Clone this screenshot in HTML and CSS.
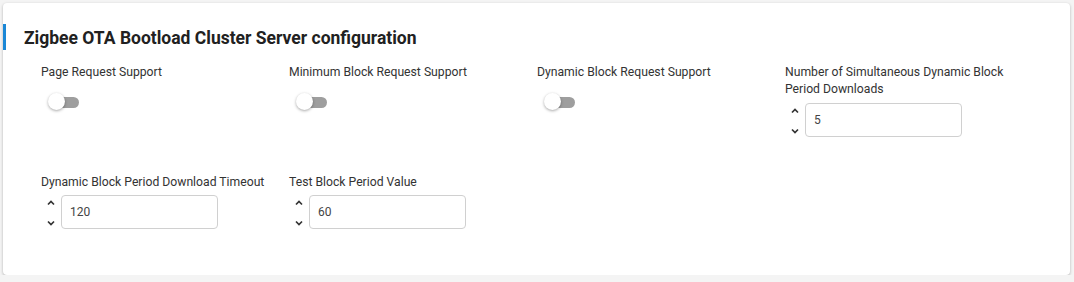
FILE: index.html
```html
<!DOCTYPE html>
<html>
<head>
    <title>Zigbee OTA Bootload Cluster Server configuration</title>
    <meta name="viewport" content="width=device-width, initial-scale=1">
    <link rel="stylesheet" href="styles.css">
</head>
<body>
    <div class="config-card">
        <div class="card-header">
            <h2 class="card-title">Zigbee OTA Bootload Cluster Server configuration</h2>
        </div>
        <div class="field-grid">
            <div class="field">
                <label class="field-label">Page Request Support</label>
                <div class="toggle"><span class="toggle-track"></span><span class="toggle-knob"></span></div>
            </div>
            <div class="field">
                <label class="field-label">Minimum Block Request Support</label>
                <div class="toggle"><span class="toggle-track"></span><span class="toggle-knob"></span></div>
            </div>
            <div class="field">
                <label class="field-label">Dynamic Block Request Support</label>
                <div class="toggle"><span class="toggle-track"></span><span class="toggle-knob"></span></div>
            </div>
            <div class="field">
                <label class="field-label">Number of Simultaneous Dynamic Block Period Downloads</label>
                <div class="number-row">
                    <div class="spinner">
                        <svg width="8" height="6" viewBox="0 0 8 6"><path d="M1 4.5 L4 1.5 L7 4.5" fill="none" stroke="#333" stroke-width="1.7"/></svg>
                        <svg width="8" height="6" viewBox="0 0 8 6"><path d="M1 1.5 L4 4.5 L7 1.5" fill="none" stroke="#333" stroke-width="1.7"/></svg>
                    </div>
                    <input class="number-input" type="text" value="5">
                </div>
            </div>
            <div class="field">
                <label class="field-label">Dynamic Block Period Download Timeout</label>
                <div class="number-row">
                    <div class="spinner">
                        <svg width="8" height="6" viewBox="0 0 8 6"><path d="M1 4.5 L4 1.5 L7 4.5" fill="none" stroke="#333" stroke-width="1.7"/></svg>
                        <svg width="8" height="6" viewBox="0 0 8 6"><path d="M1 1.5 L4 4.5 L7 1.5" fill="none" stroke="#333" stroke-width="1.7"/></svg>
                    </div>
                    <input class="number-input" type="text" value="120">
                </div>
            </div>
            <div class="field">
                <label class="field-label">Test Block Period Value</label>
                <div class="number-row">
                    <div class="spinner">
                        <svg width="8" height="6" viewBox="0 0 8 6"><path d="M1 4.5 L4 1.5 L7 4.5" fill="none" stroke="#333" stroke-width="1.7"/></svg>
                        <svg width="8" height="6" viewBox="0 0 8 6"><path d="M1 1.5 L4 4.5 L7 1.5" fill="none" stroke="#333" stroke-width="1.7"/></svg>
                    </div>
                    <input class="number-input" type="text" value="60">
                </div>
            </div>
        </div>
    </div>
</body>
</html>
```

FILE: styles.css
```css
html, body {
    margin: 0;
    padding: 0;
}
body {
    background: #f4f4f4;
    font-family: Roboto, 'Liberation Sans', Arial, sans-serif;
    color: #333;
    padding: 3px 4px 0 3px;
}
.config-card {
    background: #fff;
    border-radius: 4px;
    box-shadow: 0 1px 3px rgba(0, 0, 0, 0.28);
    padding: 21px 0 47px 0;
    height: 272px;
    box-sizing: border-box;
}
.card-header {
    height: 26px;
    border-left: 3px solid #1a87d6;
    display: flex;
    align-items: center;
    padding-left: 18px;
}
.card-title {
    margin: 1px 0 0 0;
    font-size: 17.5px;
    font-weight: 700;
    color: #212121;
}
.field-grid {
    display: grid;
    grid-template-columns: repeat(4, 248px);
    row-gap: 37px;
    padding: 14px 0 0 38px;
}
.field {
    display: flex;
    flex-direction: column;
}
.field-label {
    font-size: 12.2px;
    line-height: 17px;
    color: #333;
    padding-right: 8px;
}
.toggle {
    position: relative;
    width: 31px;
    height: 18px;
    margin: 12px 0 0 7px;
}
.toggle-track {
    position: absolute;
    left: 4px;
    top: 4px;
    width: 27px;
    height: 11px;
    border-radius: 6px;
    background: #9e9e9e;
}
.toggle-knob {
    position: absolute;
    left: 0;
    top: 0;
    width: 17px;
    height: 17px;
    border-radius: 50%;
    background: #fff;
    box-shadow: 0 1px 3px rgba(0, 0, 0, 0.35);
}
.number-row {
    display: flex;
    align-items: center;
    margin-top: 5px;
}
.field-grid .field:nth-child(n+5) .number-row {
    margin-top: 4px;
}
.spinner {
    width: 20px;
    height: 34px;
    display: flex;
    flex-direction: column;
    justify-content: space-between;
    align-items: center;
    padding: 5px 0 3px 0;
    box-sizing: border-box;
}
.number-input {
    width: 157px;
    height: 34px;
    box-sizing: border-box;
    border: 1px solid #d0d0d0;
    border-radius: 4px;
    padding: 0 8px;
    font-family: inherit;
    font-size: 12px;
    color: #444;
    outline: none;
}
```
